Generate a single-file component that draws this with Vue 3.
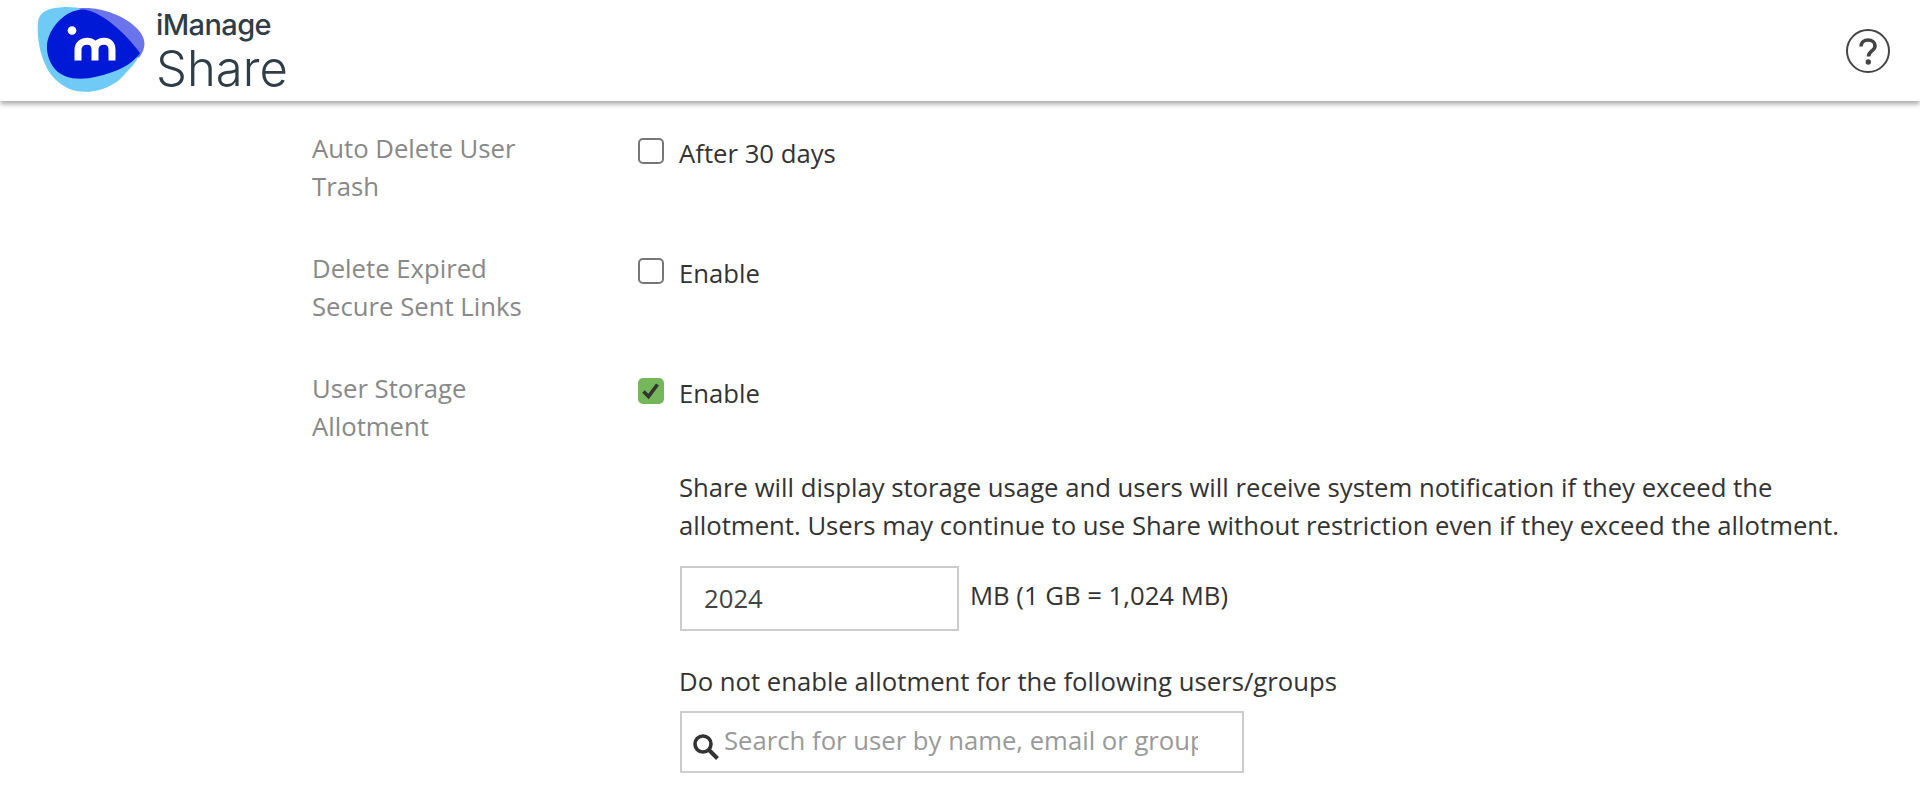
<script setup>
const rows = [
  { label: 'Auto Delete User Trash', text: 'After 30 days', checked: false },
  { label: 'Delete Expired Secure Sent Links', text: 'Enable', checked: false }
]
</script>

<template>
  <div class="page">
    <header class="topbar">
      <div class="brand">
        <svg class="logo" width="110" height="87" viewBox="110 15 330 260">
          <path d="M113 62C115 35 140 20 185 18C215 17 235 20 250 24L418 160C405 190 385 205 365 228C340 255 295 272 250 272C205 272 170 245 148 215C122 175 108 115 113 62Z" fill="#6fcbf5"/>
          <path d="M235 22C290 14 370 40 410 82C435 108 442 135 416 170L330 120Z" fill="#6c74ec"/>
          <path d="M140 135C142 85 190 28 245 25C300 26 380 100 419 156C395 190 350 212 290 226C235 240 190 232 165 205C148 185 139 160 140 135Z" fill="#0019d6"/>
          <circle cx="215" cy="88" r="13" fill="#fff"/>
          <path d="M233 178V146C233 129 246 120 261 120C275 120 284 128 284 146V178M284 146C284 128 297 120 311 120C326 120 335 129 335 146V178" fill="none" stroke="#fff" stroke-width="21"/>
        </svg>
        <div class="wordmark">
          <span class="wm-top">iManage</span>
          <span class="wm-bottom">Share</span>
        </div>
      </div>
      <svg class="help" width="44" height="44" viewBox="0 0 44 44">
        <circle cx="22" cy="22" r="21" fill="none" stroke="#444" stroke-width="2"/>
        <path d="M15 17.5C15 13 18.5 11 22 11C26 11 29 13.5 29 17C29 22 22.5 22 22.5 27.5" fill="none" stroke="#444" stroke-width="3.6"/>
        <circle cx="22.3" cy="33" r="2.7" fill="#444"/>
      </svg>
    </header>

    <main class="content">
      <section v-for="row in rows" :key="row.label" class="row">
        <div class="label">{{ row.label }}</div>
        <div class="control">
          <label class="check-line">
            <span class="box"></span>
            <span>{{ row.text }}</span>
          </label>
        </div>
      </section>

      <section class="row">
        <div class="label">User Storage Allotment</div>
        <div class="control">
          <label class="check-line">
            <span class="box on">
              <svg width="20" height="20" viewBox="0 0 20 20">
                <path d="M2.5 10.5L7.5 15.5L16.5 3.5" fill="none" stroke="#333" stroke-width="3.6"/>
              </svg>
            </span>
            <span>Enable</span>
          </label>
          <div class="details">
            <p class="note">Share will display storage usage and users will receive system notification if they exceed the allotment. Users may continue to use Share without restriction even if they exceed the allotment.</p>
            <div class="amount">
              <input class="field amount-input" type="text" value="2024" />
              <span class="unit">MB (1 GB = 1,024 MB)</span>
            </div>
            <p class="exclude">Do not enable allotment for the following users/groups</p>
            <div class="search">
              <svg class="search-icon" width="26" height="26" viewBox="0 0 26 26">
                <circle cx="10" cy="10" r="8" fill="none" stroke="#333" stroke-width="3.6"/>
                <path d="M15.5 15.5L24.5 24.5" stroke="#333" stroke-width="4"/>
              </svg>
              <input class="search-input" type="text" placeholder="Search for user by name, email or group" />
            </div>
          </div>
        </div>
      </section>
    </main>
  </div>
</template>

<style>
html, body { margin: 0; background: #fff; overflow: hidden; }
</style>

<style scoped>
.page {
  height: 803px;
  overflow: hidden;
  font-family: "Open Sans", sans-serif;
  font-size: 25.7px;
  line-height: 38px;
  color: #333;
  background: #fff;
}
.topbar {
  box-sizing: border-box;
  height: 101px;
  display: flex;
  justify-content: space-between;
  align-items: center;
  padding: 0 30px 0 37px;
  background: #fff;
  box-shadow: 0 3px 5px rgba(0, 0, 0, 0.35);
}
.logo { margin-top: -3px; }
.brand { display: flex; align-items: center; gap: 9px; }
.wordmark { display: flex; flex-direction: column; color: #2f3d48; font-family: Inter, sans-serif; margin-top: -1px; }
.wm-top { font-size: 29px; line-height: 37px; font-weight: 500; letter-spacing: -0.6px; }
.wm-bottom { font-size: 49px; line-height: 52px; font-weight: 300; }
.content { padding: 29px 0 0 312px; }
.row {
  display: grid;
  grid-template-columns: 326px 1220px;
  margin-bottom: 44px;
}
.label { color: #888; width: 250px; }
.check-line { display: flex; align-items: center; gap: 15px; height: 38px; margin-top: 5px; }
.box {
  box-sizing: border-box;
  width: 26px;
  height: 26px;
  border: 2px solid #777;
  border-radius: 5px;
  background: #fff;
  display: flex;
  align-items: center;
  justify-content: center;
  margin-top: -6px;
}
.box.on { background: #74b75a; border: none; }
.details { padding-left: 41px; margin-top: 56px; }
.note { margin: 0; }
.amount { display: flex; align-items: flex-start; gap: 11px; margin-top: 21px; margin-left: 1px; }
.field {
  box-sizing: border-box;
  width: 279px;
  height: 65px;
  border: 2px solid #ccc;
  padding: 0 22px;
  font: inherit;
  color: #444;
  outline: none;
  background: #fff;
}
.unit { margin-top: 11px; }
.exclude { margin: 32px 0 0; }
.search {
  box-sizing: border-box;
  display: flex;
  align-items: center;
  width: 564px;
  height: 62px;
  margin-top: 10px;
  margin-left: 1px;
  border: 2px solid #ccc;
  padding: 0 44px 0 11px;
}
.search-icon { flex: none; margin: 10px 5px 0 0; }
.search-input {
  flex: 1;
  min-width: 0;
  border: none;
  outline: none;
  padding: 0;
  font: inherit;
  color: #333;
  margin-top: -2px;
}
.search-input::placeholder { color: #999; opacity: 1; }
</style>
